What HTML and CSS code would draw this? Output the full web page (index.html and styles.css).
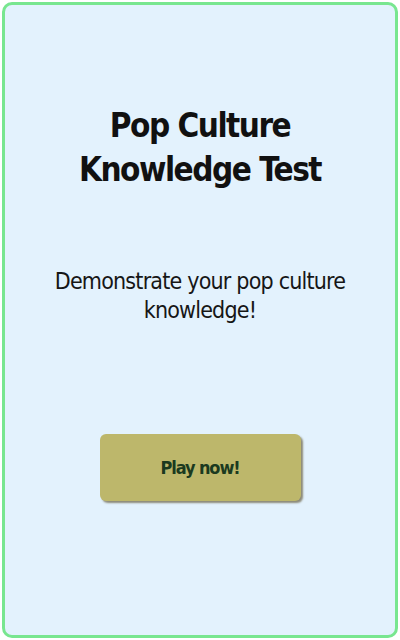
FILE: index.html
```html
<!DOCTYPE html>
<html lang="en">
<head>
<meta charset="utf-8">
<title>Pop Culture Knowledge Test</title>
<link rel="stylesheet" href="styles.css">
</head>
<body>
<main class="card">
  <h1 class="title">Pop Culture<br>Knowledge Test</h1>
  <p class="subtitle">Demonstrate your pop culture<br>knowledge!</p>
  <button class="play">Play now!</button>
</main>
</body>
</html>
```
FILE: styles.css
```css
html, body {
  margin: 0;
  padding: 0;
  background: #ffffff;
}
body {
  padding: 2px;
  box-sizing: border-box;
  height: 640px;
}
.card {
  box-sizing: border-box;
  height: 636px;
  border: 3px solid #78e68f;
  border-radius: 10px;
  background: #e3f2fd;
  display: flex;
  flex-direction: column;
  align-items: center;
  font-family: "DejaVu Sans Condensed", "Liberation Sans", sans-serif;
  text-align: center;
}
.title {
  margin: 99px 0 0;
  font-size: 33px;
  font-weight: 700;
  line-height: 44px;
  letter-spacing: -1.5px;
  color: #111111;
}
.subtitle {
  margin: 75px 0 0;
  font-size: 23px;
  line-height: 29px;
  letter-spacing: -0.8px;
  color: #161616;
}
.play {
  margin-top: 109px;
  width: 201px;
  height: 67px;
  border: none;
  border-radius: 6px;
  background: #bdb76b;
  box-shadow: 2px 2px 2px #8c8a78;
  font-family: inherit;
  font-size: 18px;
  font-weight: 700;
  letter-spacing: -1.1px;
  color: #1b3a1f;
}
```
